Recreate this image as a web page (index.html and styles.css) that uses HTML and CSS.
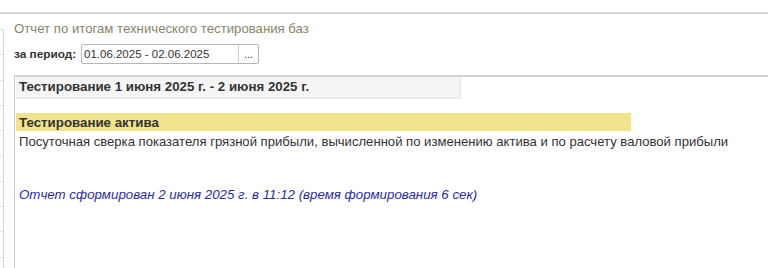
FILE: index.html
```html
<!DOCTYPE html>
<html lang="ru">
  <head>
    <meta charset="UTF-8" />
    <title>Отчет по итогам технического тестирования баз</title>
    <link rel="stylesheet" href="styles.css">
  </head>
  <body>
    <div class="topbar"></div>
    <div class="layout">
      <div class="side-list"></div>
      <div class="form">
        <div class="form-title">Отчет по итогам технического тестирования баз</div>
        <div class="period">
          <label class="period-label">за период:</label>
          <div class="period-field">
            <span class="period-value">01.06.2025 - 02.06.2025</span>
            <span class="period-btn">...</span>
          </div>
        </div>
        <div class="sheet">
          <div class="sheet-header">Тестирование 1 июня 2025 г. - 2 июня 2025 г.</div>
          <div class="sheet-group">Тестирование актива</div>
          <div class="sheet-text">Посуточная сверка показателя грязной прибыли, вычисленной по изменению актива и по расчету валовой прибыли</div>
          <div class="sheet-footer">Отчет сформирован 2 июня 2025 г. в 11:12 (время формирования 6 сек)</div>
        </div>
      </div>
    </div>
  </body>
</html>
```

FILE: styles.css
```css
body {
  margin: 0;
  font-family: "Liberation Sans", Arial, sans-serif;
  font-size: 13.3px;
  color: #333;
  background: #fff;
  height: 268px;
  overflow: hidden;
}
.topbar {
  height: 12px;
  border-bottom: 2px solid #d4d4d4;
}
.layout {
  display: flex;
  height: 254px;
}
.side-list {
  width: 3px;
  margin-top: 15px;
  border-right: 1px solid #d8d8d8;
  border-top: 1px solid #e2e2e2;
  background: repeating-linear-gradient(to bottom, #fff 0, #fff 24.3px, #e2e2e2 24.3px, #e2e2e2 25.3px);
}
.form {
  flex: 1;
  padding-left: 10px;
  display: flex;
  flex-direction: column;
}
.form-title {
  color: #8a8566;
  font-size: 13.2px;
  margin-top: 7px;
  height: 16px;
}
.period {
  display: flex;
  align-items: center;
  margin-top: 7px;
  height: 20px;
}
.period-label {
  font-size: 11.8px;
  font-weight: bold;
  color: #333;
  width: 67px;
}
.period-field {
  display: flex;
  height: 18px;
  border: 1px solid #b5b5b5;
  border-radius: 2px;
}
.period-value {
  width: 154px;
  padding-left: 2px;
  line-height: 18px;
  font-size: 11.5px;
  color: #333;
}
.period-btn {
  width: 19px;
  border-left: 1px solid #cfcfcf;
  text-align: center;
  font-size: 11px;
  line-height: 18px;
}
.sheet {
  flex: 1;
  margin-top: 11px;
  border-top: 2px solid #d2d2d2;
  border-left: 1px solid #cdcdcd;
  padding-left: 1px;
}
.sheet-header {
  width: 440px;
  height: 20px;
  line-height: 19px;
  padding-left: 3px;
  font-weight: bold;
  background: #f5f5f5;
  border-right: 2px solid #ebebeb;
  border-bottom: 2px solid #ebebeb;
}
.sheet-group {
  width: 612px;
  height: 18px;
  line-height: 19px;
  margin-top: 14px;
  padding-left: 3px;
  font-weight: bold;
  background: #efe48b;
}
.sheet-text {
  margin-top: 2px;
  padding-left: 3px;
  line-height: 18px;
  font-size: 13.1px;
}
.sheet-footer {
  margin-top: 35px;
  padding-left: 3px;
  line-height: 18px;
  font-style: italic;
  color: #2a2aa8;
}
```
